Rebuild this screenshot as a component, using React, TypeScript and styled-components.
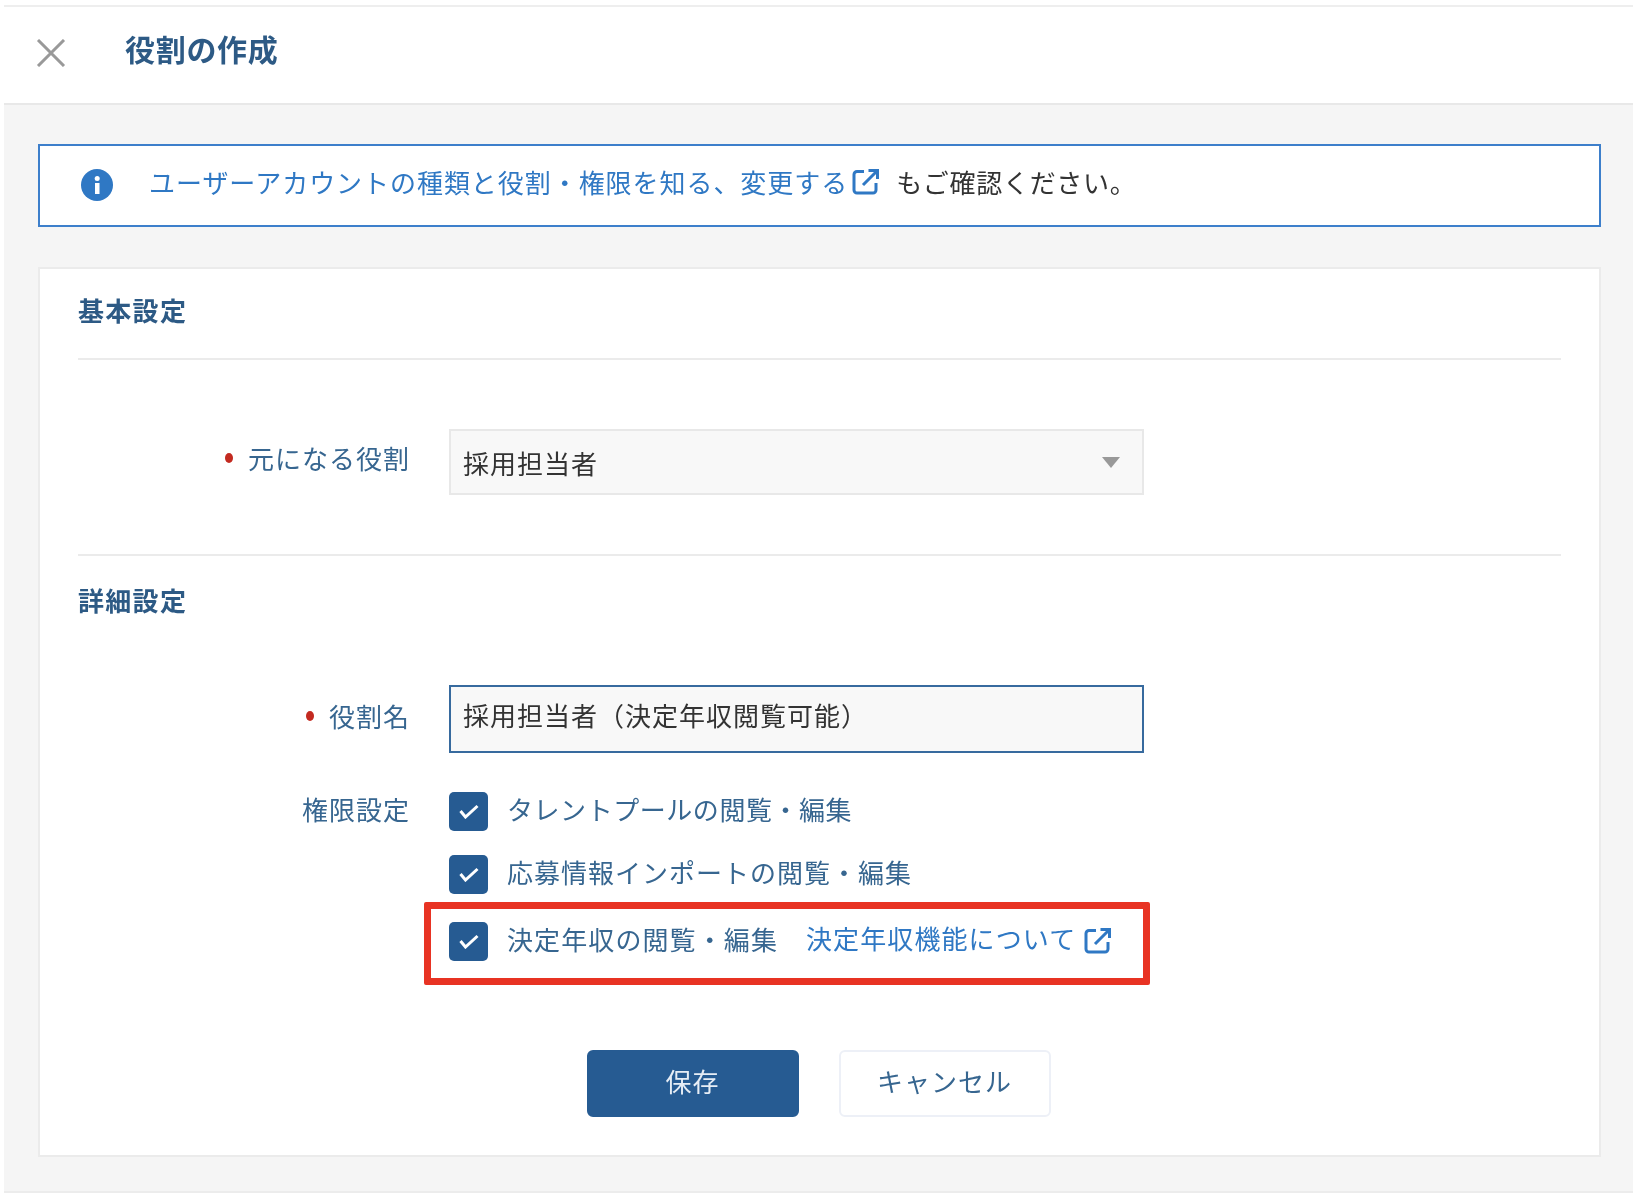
import styled, { createGlobalStyle } from "styled-components";

const GlobalStyle = createGlobalStyle`
  html, body {
    margin: 0;
    background: #ffffff;
  }
  body {
    font-family: "Noto Sans CJK JP", "Noto Sans", sans-serif;
    font-size: 26px;
    letter-spacing: 1px;
    line-height: 1;
    color: #333333;
  }
`;

const Page = styled.div`
  margin: 5px 3px 3px 4px;
  height: 1188px;
  box-sizing: border-box;
  display: flex;
  flex-direction: column;
  background: #f5f5f5;
  border-top: 2px solid #eeeeee;
  border-bottom: 2px solid #ececec;
  filter: blur(0.7px);
`;

const Header = styled.header`
  flex: none;
  height: 98px;
  box-sizing: border-box;
  display: flex;
  align-items: center;
  padding-left: 32px;
  padding-bottom: 4px;
  gap: 59px;
  background: #ffffff;
  border-bottom: 2px solid #e8e8e8;
`;

const Title = styled.h1`
  margin: 0 0 10px;
  font-size: 30px;
  font-weight: 700;
  letter-spacing: 0.7px;
  color: #2d5a85;
`;

const Main = styled.main`
  flex: 1;
  padding: 39px 32px 0 34px;
`;

const Banner = styled.div`
  height: 83px;
  box-sizing: border-box;
  display: flex;
  align-items: center;
  padding: 0 0 2px 41px;
  background: #ffffff;
  border: 2px solid #3d7fcb;
`;

const BannerText = styled.p`
  margin: 0 0 6px 36px;
  display: flex;
  align-items: center;
  gap: 4px;
  letter-spacing: 0.95px;
`;

const BannerNote = styled.span`
  margin-left: 13px;
  letter-spacing: 0.7px;
`;

const LinkText = styled.a`
  color: #2f78c4;
`;

const Panel = styled.section`
  margin-top: 40px;
  height: 890px;
  box-sizing: border-box;
  padding: 0 38px;
  background: #ffffff;
  border: 2px solid #ebebeb;
`;

const SectionTitle = styled.h2`
  margin: 0;
  font-size: 26px;
  font-weight: 700;
  letter-spacing: 1.3px;
  color: #2d5a85;
`;

const BasicSection = styled.div`
  height: 287px;
  box-sizing: border-box;
  padding-top: 28px;
  border-bottom: 2px solid #ebebeb;
`;

const BasicHead = styled.div`
  height: 63px;
  box-sizing: border-box;
  margin-bottom: 69px;
  border-bottom: 2px solid #ebebeb;
`;

const DetailSection = styled.div`
  padding-top: 31px;
`;

const FormGrid = styled.div<{ $top?: number }>`
  display: grid;
  grid-template-columns: 332px 695px;
  column-gap: 39px;
  align-items: start;
  margin-top: ${(props) => props.$top ?? 0}px;
`;

const Label = styled.div<{ $required?: boolean; $height: number }>`
  display: flex;
  justify-content: flex-end;
  align-items: center;
  gap: 15px;
  color: #376690;
  height: ${(props) => props.$height}px;

  &::before {
    content: "";
    display: ${(props) => (props.$required ? "block" : "none")};
    width: 8px;
    height: 10px;
    border-radius: 50%;
    background: #c32a20;
  }
`;

const SelectBox = styled.div`
  height: 66px;
  box-sizing: border-box;
  display: flex;
  align-items: center;
  justify-content: space-between;
  padding: 2px 22px 0 12px;
  background: #f8f8f8;
  border: 2px solid #e8e8e8;
`;

const Arrow = styled.span`
  width: 0;
  height: 0;
  margin-bottom: 2px;
  border-left: 9px solid transparent;
  border-right: 9px solid transparent;
  border-top: 11px solid #999999;
`;

const NameInput = styled.input`
  display: block;
  width: 100%;
  height: 68px;
  box-sizing: border-box;
  padding: 0 12px 9px;
  font: inherit;
  letter-spacing: inherit;
  color: #333333;
  background: #f8f8f8;
  border: 2px solid #376a9e;
  border-radius: 0;
  outline: none;
`;

const Options = styled.div`
  display: flex;
  flex-direction: column;
  gap: 24px;
`;

const OptionRow = styled.div<{ $marked?: boolean; $spacing: number }>`
  position: relative;
  display: flex;
  align-items: center;
  height: 39px;
  margin-top: ${(props) => (props.$marked ? "4px" : "0")};
  letter-spacing: ${(props) => props.$spacing}px;
  color: #376690;
`;

const OptionText = styled.span`
  margin-bottom: 5px;
`;

const Marker = styled.div`
  position: absolute;
  inset: -20px -6px -24px -25px;
  border: 7px solid #e83323;
  border-radius: 2px;
`;

const CheckBox = styled.span`
  flex: none;
  width: 39px;
  height: 39px;
  margin-right: 19px;
  display: flex;
  align-items: center;
  justify-content: center;
  background: #265b92;
  border-radius: 5px;
`;

const OptionLink = styled.a`
  display: flex;
  align-items: center;
  gap: 8px;
  margin: 0 0 3px 28px;
  color: #2f78c4;
`;

const Buttons = styled.div`
  display: flex;
  justify-content: center;
  gap: 40px;
  margin-top: 89px;
  padding-right: 2px;
`;

const Button = styled.button<{ $primary?: boolean }>`
  width: 212px;
  height: 67px;
  box-sizing: border-box;
  padding: 0 0 5px;
  font: inherit;
  letter-spacing: inherit;
  color: ${(props) => (props.$primary ? "#e6edf5" : "#376690")};
  background: ${(props) => (props.$primary ? "#265b92" : "#ffffff")};
  border: 2px solid ${(props) => (props.$primary ? "#265b92" : "#edf0f7")};
  border-radius: 6px;
`;

const CloseIcon = () => (
  <svg width="30" height="28" viewBox="0 0 30 28" fill="none">
    <path d="M2 1L28 27M28 1L2 27" stroke="#999999" strokeWidth="3" />
  </svg>
);

const InfoIcon = () => (
  <svg width="32" height="32" viewBox="0 0 32 32">
    <circle cx="16" cy="16" r="16" fill="#2f78c4" />
    <rect x="14" y="14" width="4.5" height="11" fill="#ffffff" />
    <circle cx="16.2" cy="9.5" r="2.5" fill="#ffffff" />
  </svg>
);

const ExternalIcon = () => (
  <svg width="27" height="27" viewBox="0 0 27 27" fill="none" stroke="#2f78c4" strokeWidth="3">
    <path d="M12 3.5H5a3 3 0 0 0-3 3V22a3 3 0 0 0 3 3h16a3 3 0 0 0 3-3V15" />
    <path d="M11 17L24.5 3.5M16.5 2.5H25.5V11" />
  </svg>
);

const CheckIcon = () => (
  <svg width="20" height="15" viewBox="0 0 20 15" fill="none">
    <path d="M1.5 7L6.5 13L18.5 2" stroke="#ffffff" strokeWidth="3" />
  </svg>
);

const App = () => {
  return (
    <>
      <GlobalStyle />
      <Page>
        <Header>
          <CloseIcon />
          <Title>役割の作成</Title>
        </Header>
        <Main>
          <Banner>
            <InfoIcon />
            <BannerText>
              <LinkText>ユーザーアカウントの種類と役割・権限を知る、変更する</LinkText>
              <ExternalIcon />
              <BannerNote>もご確認ください。</BannerNote>
            </BannerText>
          </Banner>
          <Panel>
            <BasicSection>
              <BasicHead>
                <SectionTitle>基本設定</SectionTitle>
              </BasicHead>
              <FormGrid>
                <Label $required $height={58}>元になる役割</Label>
                <SelectBox>
                  採用担当者
                  <Arrow />
                </SelectBox>
              </FormGrid>
            </BasicSection>
            <DetailSection>
              <SectionTitle>詳細設定</SectionTitle>
              <FormGrid $top={72}>
                <Label $required $height={62}>役割名</Label>
                <NameInput readOnly value="採用担当者（決定年収閲覧可能）" />
              </FormGrid>
              <FormGrid $top={39}>
                <Label $height={33}>権限設定</Label>
                <Options>
                  <OptionRow $spacing={0.55}>
                    <CheckBox><CheckIcon /></CheckBox>
                    <OptionText>タレントプールの閲覧・編集</OptionText>
                  </OptionRow>
                  <OptionRow $spacing={1}>
                    <CheckBox><CheckIcon /></CheckBox>
                    <OptionText>応募情報インポートの閲覧・編集</OptionText>
                  </OptionRow>
                  <OptionRow $marked $spacing={1.1}>
                    <CheckBox><CheckIcon /></CheckBox>
                    <OptionText>決定年収の閲覧・編集</OptionText>
                    <OptionLink>
                      <OptionText>決定年収機能について</OptionText>
                      <ExternalIcon />
                    </OptionLink>
                    <Marker />
                  </OptionRow>
                </Options>
              </FormGrid>
              <Buttons>
                <Button $primary>保存</Button>
                <Button>キャンセル</Button>
              </Buttons>
            </DetailSection>
          </Panel>
        </Main>
      </Page>
    </>
  );
};

export default App;
